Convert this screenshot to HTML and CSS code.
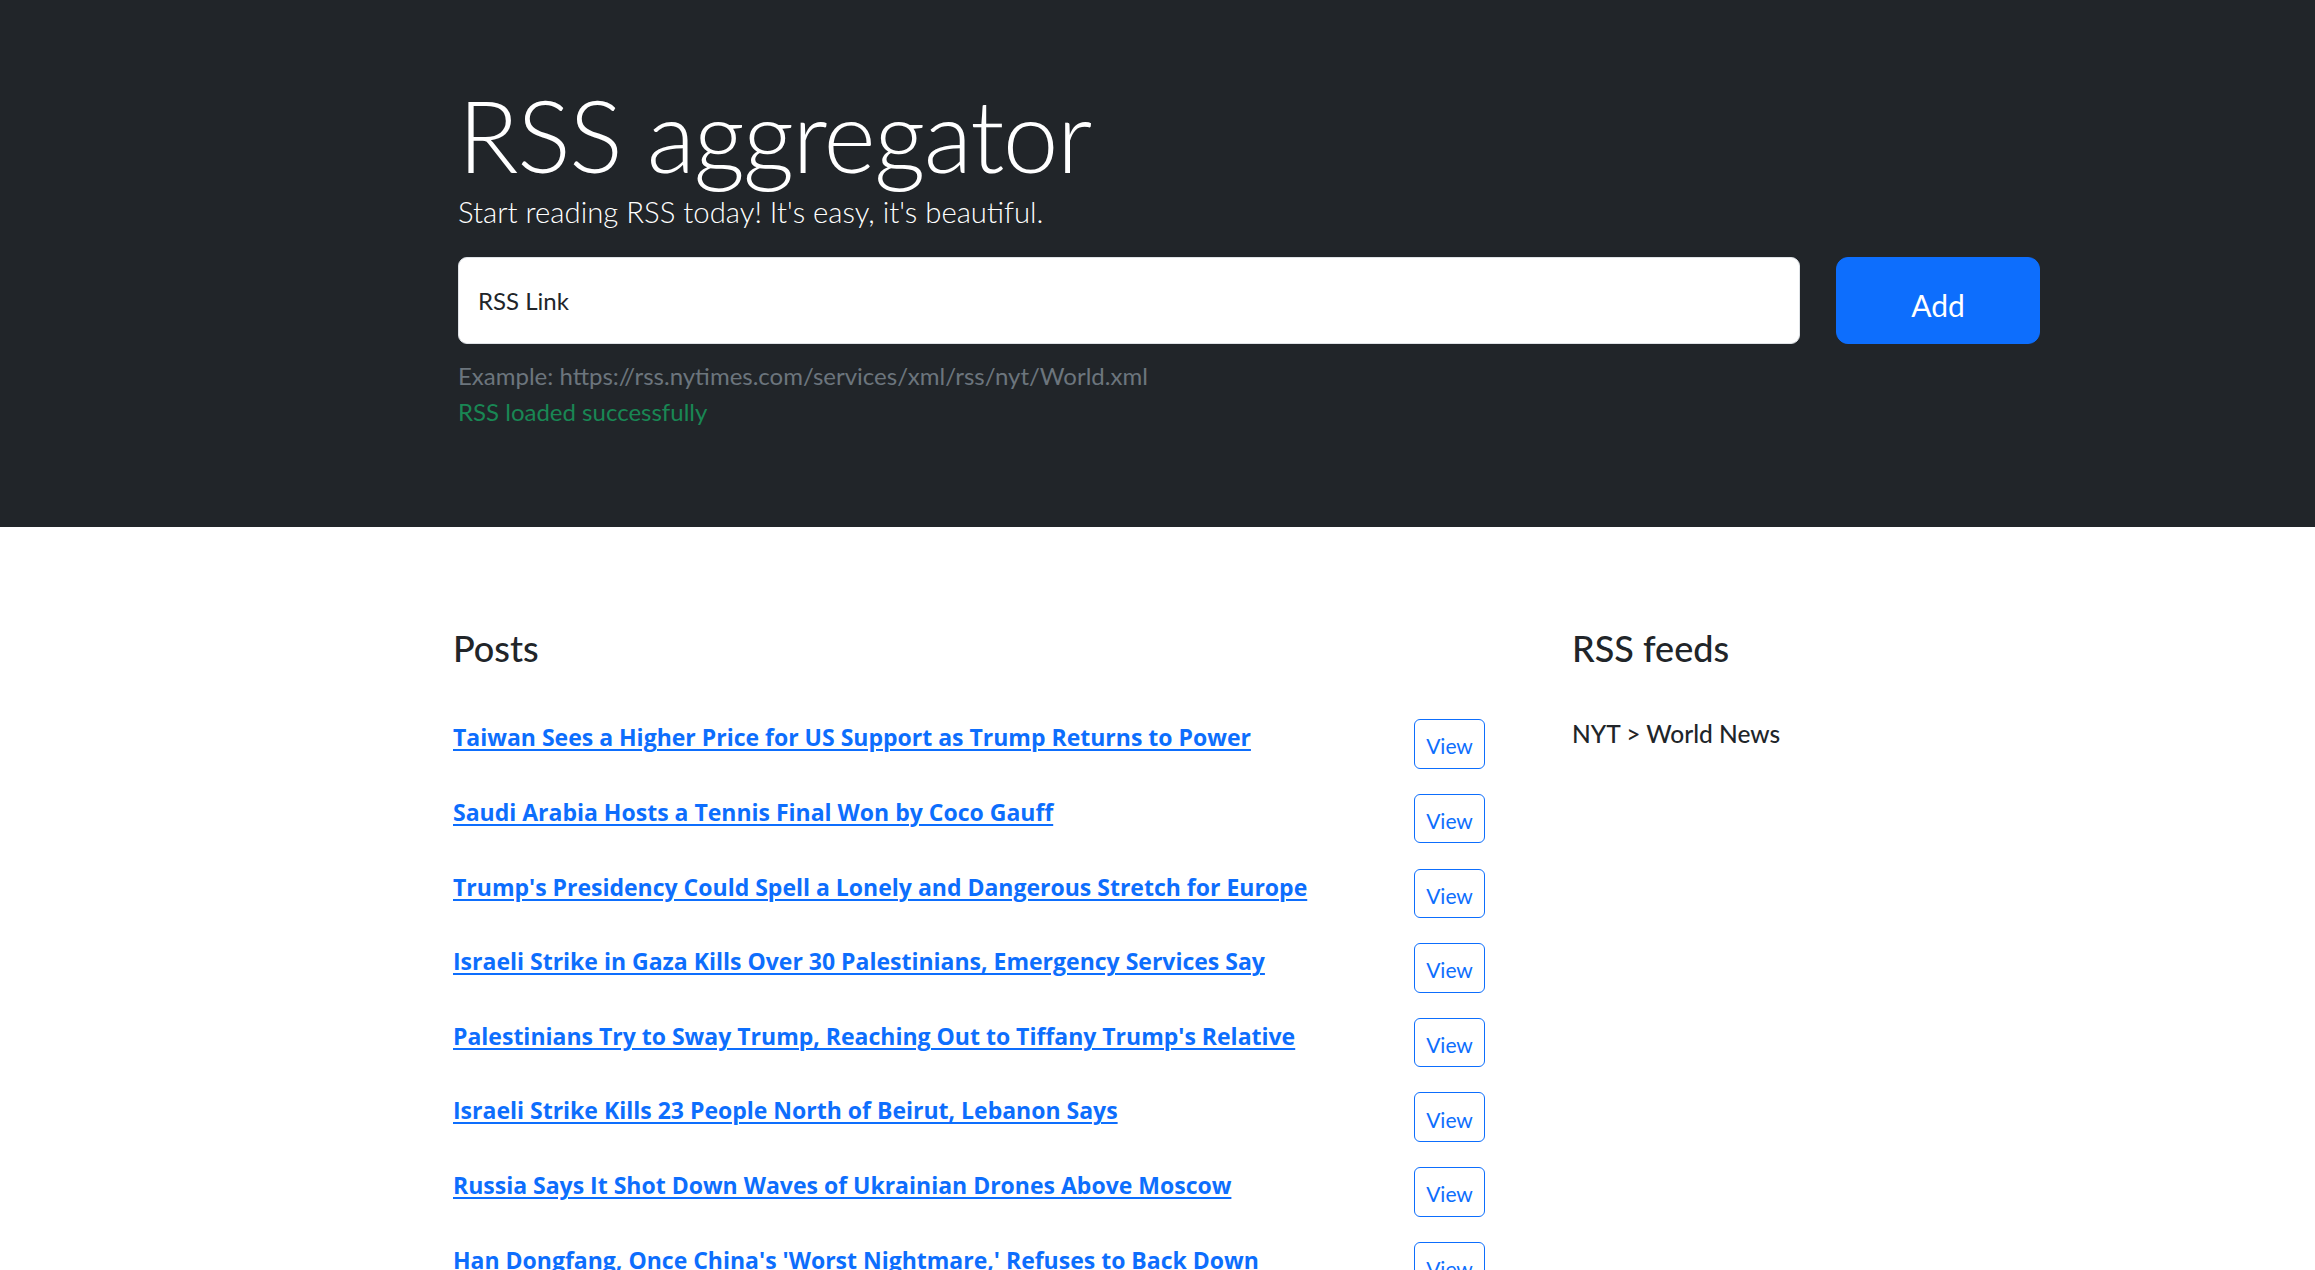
FILE: index.html
```html
<!DOCTYPE html>
<html lang="en">
<head>
<meta charset="utf-8">
<title>RSS aggregator</title>
<link rel="stylesheet" href="styles.css">
</head>
<body>
<section class="hero">
  <div class="hero-inner">
    <h1 class="title">RSS aggregator</h1>
    <p class="lead">Start reading RSS today! It's easy, it's beautiful.</p>
    <form class="rss-form">
      <div class="field"><span class="field-label">RSS Link</span></div>
      <button type="button" class="btn-add">Add</button>
    </form>
    <p class="hint">Example: https://rss.nytimes.com/services/xml/rss/nyt/World.xml</p>
    <p class="feedback">RSS loaded successfully</p>
  </div>
</section>
<section class="content">
  <div class="posts">
    <h2 class="section-title">Posts</h2>
    <ul class="post-list">
      <li class="post"><a href="#" class="post-link">Taiwan Sees a Higher Price for US Support as Trump Returns to Power</a><button type="button" class="btn-view">View</button></li>
      <li class="post"><a href="#" class="post-link">Saudi Arabia Hosts a Tennis Final Won by Coco Gauff</a><button type="button" class="btn-view">View</button></li>
      <li class="post"><a href="#" class="post-link">Trump's Presidency Could Spell a Lonely and Dangerous Stretch for Europe</a><button type="button" class="btn-view">View</button></li>
      <li class="post"><a href="#" class="post-link">Israeli Strike in Gaza Kills Over 30 Palestinians, Emergency Services Say</a><button type="button" class="btn-view">View</button></li>
      <li class="post"><a href="#" class="post-link">Palestinians Try to Sway Trump, Reaching Out to Tiffany Trump's Relative</a><button type="button" class="btn-view">View</button></li>
      <li class="post"><a href="#" class="post-link">Israeli Strike Kills 23 People North of Beirut, Lebanon Says</a><button type="button" class="btn-view">View</button></li>
      <li class="post"><a href="#" class="post-link">Russia Says It Shot Down Waves of Ukrainian Drones Above Moscow</a><button type="button" class="btn-view">View</button></li>
      <li class="post"><a href="#" class="post-link">Han Dongfang, Once China's 'Worst Nightmare,' Refuses to Back Down</a><button type="button" class="btn-view">View</button></li>
    </ul>
  </div>
  <div class="feeds">
    <h2 class="section-title">RSS feeds</h2>
    <ul class="feed-list">
      <li class="feed"><h3 class="feed-title">NYT &gt; World News</h3></li>
    </ul>
  </div>
</section>
</body>
</html>
```
FILE: styles.css
```css
* { box-sizing: border-box; }
html, body { margin: 0; padding: 0; }
body {
  font-family: Lato, "Open Sans", sans-serif;
  color: #212529;
  background: #fff;
}
.hero {
  background: #212529;
  height: 527px;
}
.hero-inner {
  padding: 74px 275px 0 458px;
}
.title {
  margin: 0;
  font-size: 100px;
  font-weight: 300;
  line-height: 120px;
  letter-spacing: -1.5px;
  color: #fff;
}
.lead {
  margin: 0;
  font-size: 29.3px;
  font-weight: 300;
  line-height: 1.2;
  color: #fff;
}
.rss-form {
  display: flex;
  gap: 36px;
  margin-top: 28px;
  height: 87px;
}
.field {
  flex: 1;
  background: #fff;
  border: 1.5px solid #dee2e6;
  border-radius: 9px;
  display: flex;
  align-items: center;
  padding-left: 19px;
}
.field-label {
  font-size: 24px;
  color: #212529;
}
.btn-add {
  width: 204px;
  background: #0d6efd;
  border: 1.5px solid #0d6efd;
  border-radius: 12px;
  color: #fff;
  font-family: Lato, sans-serif;
  font-size: 30px;
  padding: 8px 0 0;
}
.hint {
  margin: 14px 0 0;
  font-size: 24px;
  line-height: 36px;
  color: #6c757d;
}
.feedback {
  margin: 0;
  font-size: 24px;
  line-height: 36px;
  color: #198754;
}
.content {
  display: flex;
  gap: 87px;
  padding: 100px 0 0 453px;
}
.posts { width: 1032px; flex: none; }
.feeds { flex: 1; }
.section-title {
  margin: 0;
  font-size: 36px;
  font-weight: 500;
  line-height: 1.2;
}
.post-list, .feed-list {
  list-style: none;
  margin: 0;
  padding: 0;
}
.post-list { margin-top: 37px; }
.post {
  display: flex;
  justify-content: space-between;
  align-items: flex-start;
  height: 74.67px;
  padding-top: 12px;
}
.post-link {
  font-family: "Open Sans", sans-serif;
  font-weight: 700;
  font-size: 23px;
  line-height: 36px;
  color: #0d6efd;
  text-decoration: underline;
  text-decoration-thickness: 2px;
  text-underline-offset: 3px;
}
.btn-view {
  width: 71px;
  height: 49.5px;
  background: #fff;
  border: 1.5px solid #0d6efd;
  border-radius: 6px;
  color: #0d6efd;
  font-family: Lato, sans-serif;
  font-size: 21px;
  padding: 4px 0 0;
}
.feed-list { margin-top: 49px; }
.feed-title {
  margin: 0;
  font-size: 24.5px;
  font-weight: 500;
  line-height: 1.2;
}
```
